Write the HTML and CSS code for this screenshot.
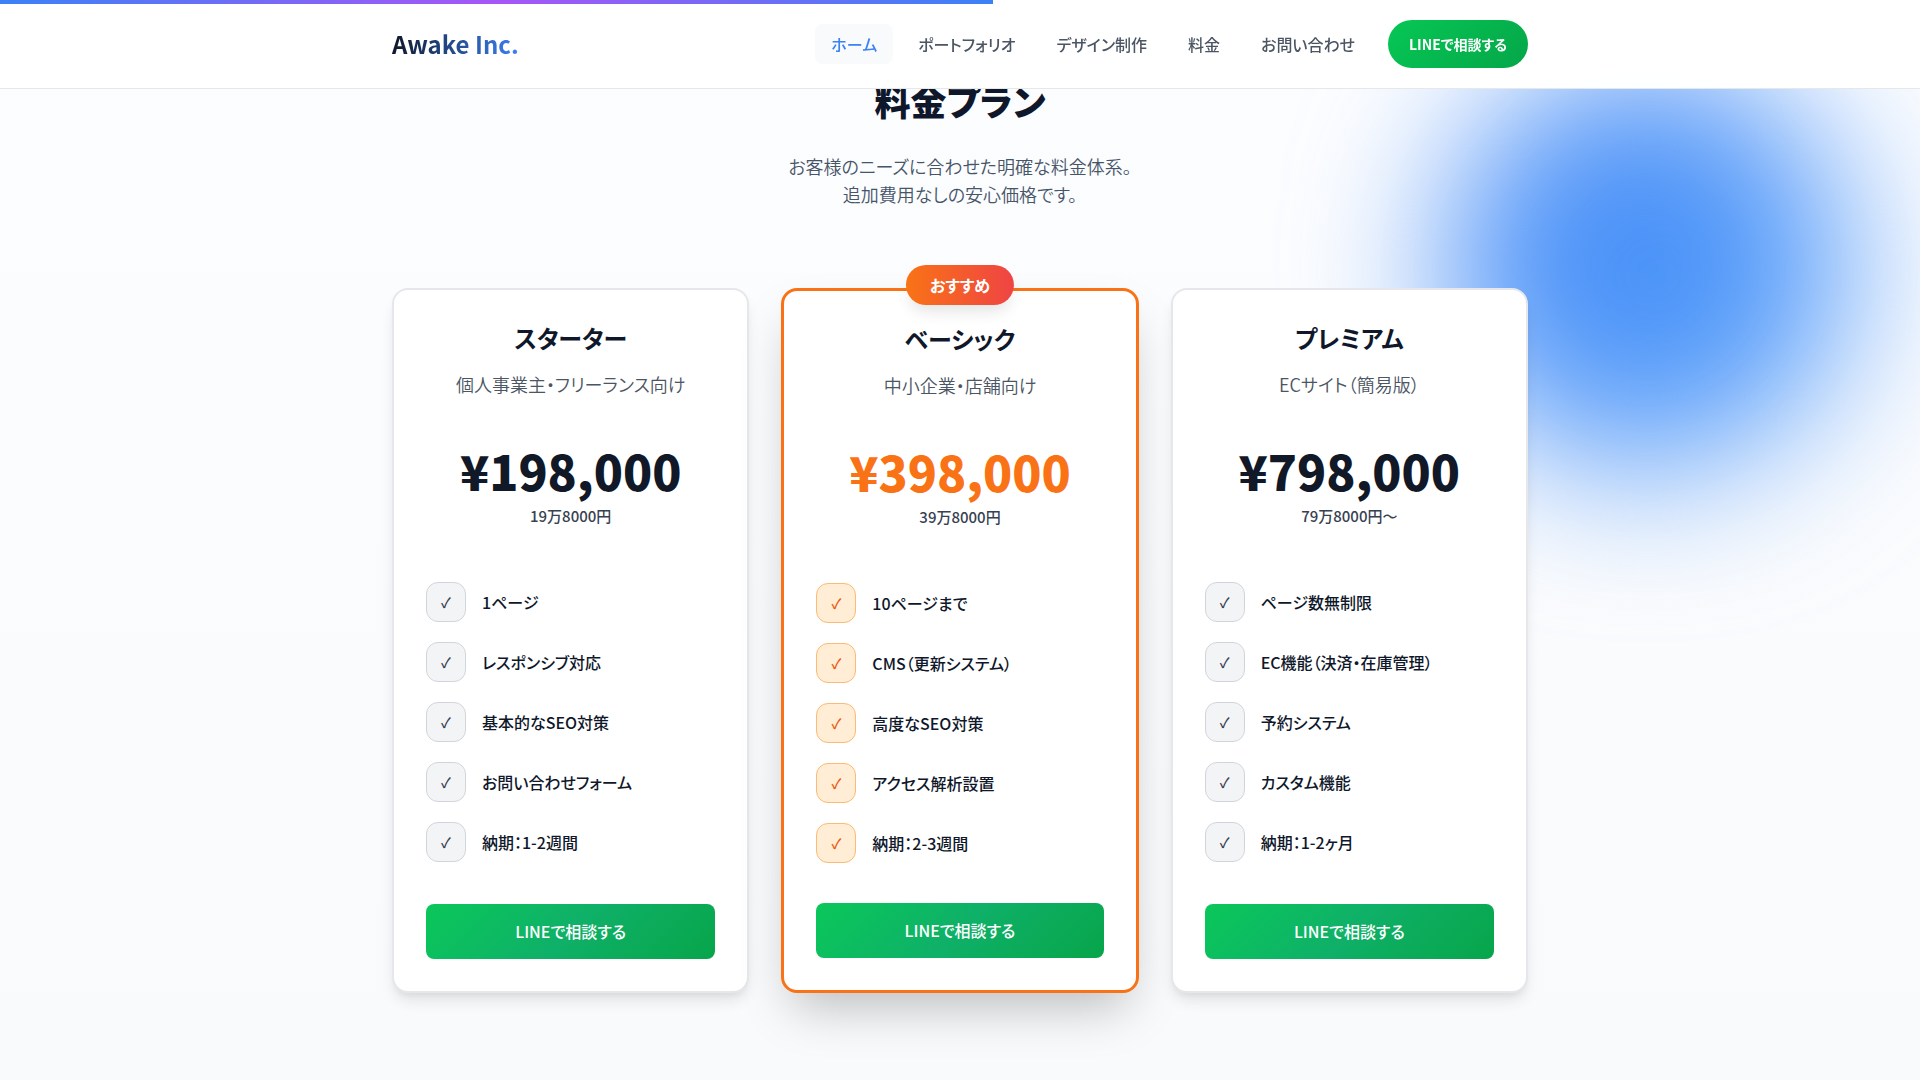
FILE: index.html
```html
<!DOCTYPE html>
<html lang="ja">
<head>
<meta charset="utf-8">
<meta name="viewport" content="width=device-width, initial-scale=1">
<title>料金プラン | Awake Inc.</title>
<link rel="stylesheet" href="styles.css">
</head>
<body>
<header class="site-header">
  <div class="progress" style="width: 51.7%"></div>
  <div class="header-inner container">
    <a class="logo" href="#">Awake Inc.</a>
    <nav class="nav">
      <a class="nav-link active" href="#">ホーム</a>
      <a class="nav-link" href="#portfolio">ポートフォリオ</a>
      <a class="nav-link" href="#design">デザイン制作</a>
      <a class="nav-link" href="#pricing">料金</a>
      <a class="nav-link" href="#contact">お問い合わせ</a>
      <a class="nav-cta" href="#line">LINEで相談する</a>
    </nav>
  </div>
</header>
<main class="pricing" id="pricing">
  <div class="glow"></div>
  <div class="container content">
    <div class="intro">
      <h2 class="heading">料金プラン</h2>
      <p class="lead">お客様のニーズに合わせた明確な料金体系。<br>追加費用なしの安心価格です。</p>
    </div>
    <div class="plans">
      <article class="plan">
        <h3 class="plan-name">スターター</h3>
        <p class="plan-target">個人事業主・フリーランス向け</p>
        <p class="price">¥198,000</p>
        <p class="price-note">19万8000円</p>
        <ul class="features">
          <li class="feature"><span class="check">✓</span>1ページ</li>
          <li class="feature"><span class="check">✓</span>レスポンシブ対応</li>
          <li class="feature"><span class="check">✓</span>基本的なSEO対策</li>
          <li class="feature"><span class="check">✓</span>お問い合わせフォーム</li>
          <li class="feature"><span class="check">✓</span>納期：1-2週間</li>
        </ul>
        <button class="plan-button" type="button">LINEで相談する</button>
      </article>
      <article class="plan featured">
        <span class="badge">おすすめ</span>
        <h3 class="plan-name">ベーシック</h3>
        <p class="plan-target">中小企業・店舗向け</p>
        <p class="price">¥398,000</p>
        <p class="price-note">39万8000円</p>
        <ul class="features">
          <li class="feature"><span class="check">✓</span>10ページまで</li>
          <li class="feature"><span class="check">✓</span>CMS（更新システム）</li>
          <li class="feature"><span class="check">✓</span>高度なSEO対策</li>
          <li class="feature"><span class="check">✓</span>アクセス解析設置</li>
          <li class="feature"><span class="check">✓</span>納期：2-3週間</li>
        </ul>
        <button class="plan-button" type="button">LINEで相談する</button>
      </article>
      <article class="plan">
        <h3 class="plan-name">プレミアム</h3>
        <p class="plan-target">ECサイト（簡易版）</p>
        <p class="price">¥798,000</p>
        <p class="price-note">79万8000円〜</p>
        <ul class="features">
          <li class="feature"><span class="check">✓</span>ページ数無制限</li>
          <li class="feature"><span class="check">✓</span>EC機能（決済・在庫管理）</li>
          <li class="feature"><span class="check">✓</span>予約システム</li>
          <li class="feature"><span class="check">✓</span>カスタム機能</li>
          <li class="feature"><span class="check">✓</span>納期：1-2ヶ月</li>
        </ul>
        <button class="plan-button" type="button">LINEで相談する</button>
      </article>
    </div>
  </div>
</main>
</body>
</html>
```
FILE: styles.css
```css
* {
  box-sizing: border-box;
}

body {
  margin: 0;
  font-family: "Noto Sans CJK JP", sans-serif;
  font-feature-settings: "palt";
  color: #0f172a;
  background: #fafbfd;
}

h2, h3, p, ul {
  margin: 0;
  padding: 0;
}

a {
  text-decoration: none;
}

.container {
  width: 100%;
  max-width: 1200px;
  margin: 0 auto;
  padding: 0 32px;
}

.site-header {
  position: fixed;
  top: 0;
  left: 0;
  right: 0;
  z-index: 10;
  background: #fffffffd;
  border-bottom: 1px solid #e5e7eb;
}

.progress {
  position: absolute;
  top: 0;
  left: 0;
  height: 4px;
  background: linear-gradient(90deg, #3b82f6, #a855f7, #3b82f6);
}

.header-inner {
  display: flex;
  align-items: center;
  justify-content: space-between;
  height: 88px;
}

.logo {
  font-size: 24px;
  line-height: 36px;
  font-weight: 700;
  color: transparent;
  background: linear-gradient(90deg, #0f172a, #3b82f6);
  background-clip: text;
}

.nav {
  display: flex;
  align-items: center;
  gap: 9px;
}

.nav-link {
  padding: 8px 16px;
  border-radius: 8px;
  font-size: 16px;
  line-height: 24px;
  font-weight: 500;
  color: #4b5563;
}

.nav-link.active {
  color: #3b82f6;
  background: #f8fafc;
}

.nav-cta {
  margin-left: 8px;
  padding: 12px 21px;
  border-radius: 24px;
  font-size: 14px;
  line-height: 24px;
  font-weight: 700;
  color: #fff;
  background: linear-gradient(135deg, #06c755, #05a648);
}

.pricing {
  position: relative;
  overflow: hidden;
  min-height: 100vh;
  padding: 72px 0 80px;
  background: linear-gradient(180deg, #fcfdff, #f9fafc);
}

.glow {
  position: absolute;
  top: 68px;
  right: 72px;
  width: 400px;
  height: 400px;
  border-radius: 50%;
  background: linear-gradient(135deg, #3f86f6, #5aa2fb);
  filter: blur(76px);
}

.content {
  position: relative;
}

.intro {
  margin-bottom: 80px;
  text-align: center;
}

.heading {
  margin-bottom: 24px;
  font-size: 36px;
  line-height: 56px;
  font-weight: 900;
}

.lead {
  font-size: 18px;
  line-height: 28px;
  font-weight: 350;
  color: #475569;
}

.plans {
  display: grid;
  grid-template-columns: repeat(3, 1fr);
  gap: 32px;
}

.plan {
  position: relative;
  display: flex;
  flex-direction: column;
  padding: 32px;
  text-align: center;
  background: #fff;
  border: 2px solid #e5e7eb;
  border-radius: 16px;
  box-shadow: 0 10px 15px -3px #0000001a, 0 4px 6px -2px #0000000d;
}

.plan.featured {
  border: 3px solid #f97316;
  box-shadow: 0 25px 50px -12px #00000040;
}

.badge {
  position: absolute;
  top: -26px;
  left: 50%;
  transform: translateX(-50%);
  padding: 8px 24px;
  border-radius: 20px;
  font-size: 16px;
  line-height: 24px;
  font-weight: 700;
  white-space: nowrap;
  color: #fff;
  background: linear-gradient(90deg, #f97316, #ef4444);
  box-shadow: 0 10px 15px -3px #0000001a;
}

.plan-name {
  margin-bottom: 16px;
  font-size: 24px;
  line-height: 32px;
  font-weight: 700;
}

.plan-target {
  margin-bottom: 44px;
  font-size: 18px;
  line-height: 28px;
  font-weight: 350;
  color: #4b5563;
}

.price {
  margin-bottom: 4px;
  font-size: 48px;
  line-height: 56px;
  font-weight: 900;
  color: #111827;
}

.featured .price {
  color: #f97316;
}

.price-note {
  margin-bottom: 52px;
  font-size: 15px;
  line-height: 28px;
  font-weight: 500;
  color: #374151;
}

.features {
  display: grid;
  gap: 20px;
  margin-bottom: 40px;
  list-style: none;
  text-align: left;
}

.feature {
  display: flex;
  align-items: center;
  gap: 16px;
  font-size: 16px;
  line-height: 24px;
  font-weight: 500;
}

.check {
  display: flex;
  align-items: center;
  justify-content: center;
  width: 40px;
  height: 40px;
  border: 1px solid #d1d5db;
  border-radius: 12px;
  font-size: 14px;
  color: #374151;
  background: #f3f4f6;
}

.featured .check {
  border-color: #fdba74;
  color: #ea580c;
  background: #ffedd5;
}

.plan-button {
  width: 100%;
  margin-top: auto;
  padding: 15px 24px;
  border: 0;
  border-radius: 8px;
  font: inherit;
  font-feature-settings: inherit;
  font-size: 16px;
  line-height: 25px;
  font-weight: 500;
  color: #fff;
  background: linear-gradient(135deg, #0ac75a, #0fb068 50%, #07a54a);
}
```
